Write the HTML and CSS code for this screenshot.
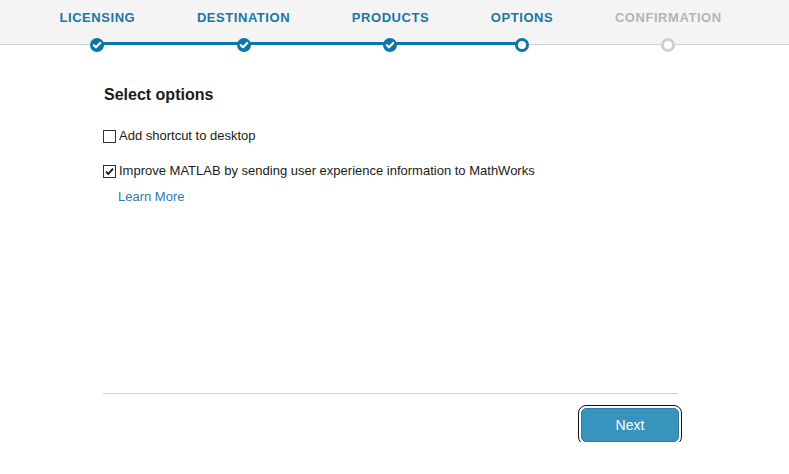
FILE: index.html
```html
<!DOCTYPE html>
<html>
<head>
<meta charset="utf-8">
<link rel="stylesheet" href="styles.css">
</head>
<body>
<header class="header">
  <div class="track"></div>
  <ol class="steps">
    <li class="step done"><span class="label">LICENSING</span><span class="node"><svg viewBox="0 0 14 14" width="14" height="14"><path d="M3.8 7.2 L6 9.3 L10.2 4.9" fill="none" stroke="#fff" stroke-width="2.2" stroke-linecap="round" stroke-linejoin="round"/></svg></span></li>
    <li class="step done"><span class="label">DESTINATION</span><span class="node"><svg viewBox="0 0 14 14" width="14" height="14"><path d="M3.8 7.2 L6 9.3 L10.2 4.9" fill="none" stroke="#fff" stroke-width="2.2" stroke-linecap="round" stroke-linejoin="round"/></svg></span></li>
    <li class="step done"><span class="label">PRODUCTS</span><span class="node"><svg viewBox="0 0 14 14" width="14" height="14"><path d="M3.8 7.2 L6 9.3 L10.2 4.9" fill="none" stroke="#fff" stroke-width="2.2" stroke-linecap="round" stroke-linejoin="round"/></svg></span></li>
    <li class="step current"><span class="label">OPTIONS</span><span class="node"></span></li>
    <li class="step todo"><span class="label">CONFIRMATION</span><span class="node"></span></li>
  </ol>
</header>
<main class="main">
  <div class="content">
    <h2 class="title">Select options</h2>
    <label class="option first"><span class="box"></span><span>Add shortcut to desktop</span></label>
    <label class="option second"><span class="box"><svg viewBox="0 0 11 11" width="11" height="11"><path d="M2 5.6 L4.3 8 L9 2.6" fill="none" stroke="#111" stroke-width="1.8"/></svg></span><span>Improve MATLAB by sending user experience information to MathWorks</span></label>
    <a class="learn">Learn More</a>
  </div>
  <div class="footer">
    <button class="next">Next</button>
  </div>
</main>
</body>
</html>
```
FILE: styles.css
```css
html, body {
  margin: 0;
  padding: 0;
  background: #fff;
  font-family: "Liberation Sans", Arial, sans-serif;
  color: #222;
}
.header {
  position: relative;
  height: 44px;
  background: #f4f4f4;
  border-bottom: 1px solid #cfcfcf;
}
.track {
  position: absolute;
  left: 97px;
  width: 426px;
  top: 42px;
  height: 3px;
  background: #0b76a8;
}
.steps {
  list-style: none;
  margin: 0;
  padding: 10px 0 0 59.5px;
  display: flex;
  gap: 61.7px;
}
.step {
  display: flex;
  flex-direction: column;
  align-items: center;
}
.label {
  font-size: 13px;
  line-height: 16px;
  font-weight: bold;
  letter-spacing: 0.55px;
  color: #1677a8;
  white-space: nowrap;
}
.todo .label {
  color: #b4b4b4;
}
.node {
  position: relative;
  z-index: 1;
  margin-top: 11.5px;
  width: 14px;
  height: 14px;
  box-sizing: border-box;
  border-radius: 50%;
  display: flex;
}
.done .node {
  background: #0b76a8;
}
.current .node {
  background: #fff;
  border: 3px solid #0b76a8;
}
.todo .node {
  background: #fff;
  border: 3px solid #cfcfcf;
}
.main {
  width: 575px;
  margin: 0 0 0 103px;
}
.content {
  height: 348px;
  border-bottom: 1px solid #cfcfcf;
  display: flex;
  flex-direction: column;
  align-items: flex-start;
}
.title {
  margin: 40px 0 0 1px;
  font-size: 16px;
  line-height: 20px;
  font-weight: bold;
  color: #1a1a1a;
}
.option {
  display: flex;
  align-items: center;
  gap: 3px;
  font-size: 13px;
  line-height: 18px;
  color: #1a1a1a;
}
.option.first {
  margin-top: 22px;
}
.option.second {
  margin-top: 17px;
}
.box {
  width: 13px;
  height: 13px;
  box-sizing: border-box;
  border: 1px solid #333;
  background: #fff;
  display: flex;
  align-items: center;
  justify-content: center;
  margin-top: 1px;
}
.learn {
  margin: 8px 0 0 15px;
  font-size: 13px;
  line-height: 18px;
  color: #2f7ab8;
}
.footer {
  display: flex;
  justify-content: flex-end;
  padding-top: 14px;
  margin-right: -1px;
}
.next {
  width: 98px;
  height: 34px;
  border: 1px solid #2a7fa8;
  border-radius: 5px;
  background: #3893bd;
  color: #fff;
  font-family: "Liberation Sans", Arial, sans-serif;
  font-size: 14px;
  outline: 1.5px solid #111;
  outline-offset: 2.5px;
}
```
